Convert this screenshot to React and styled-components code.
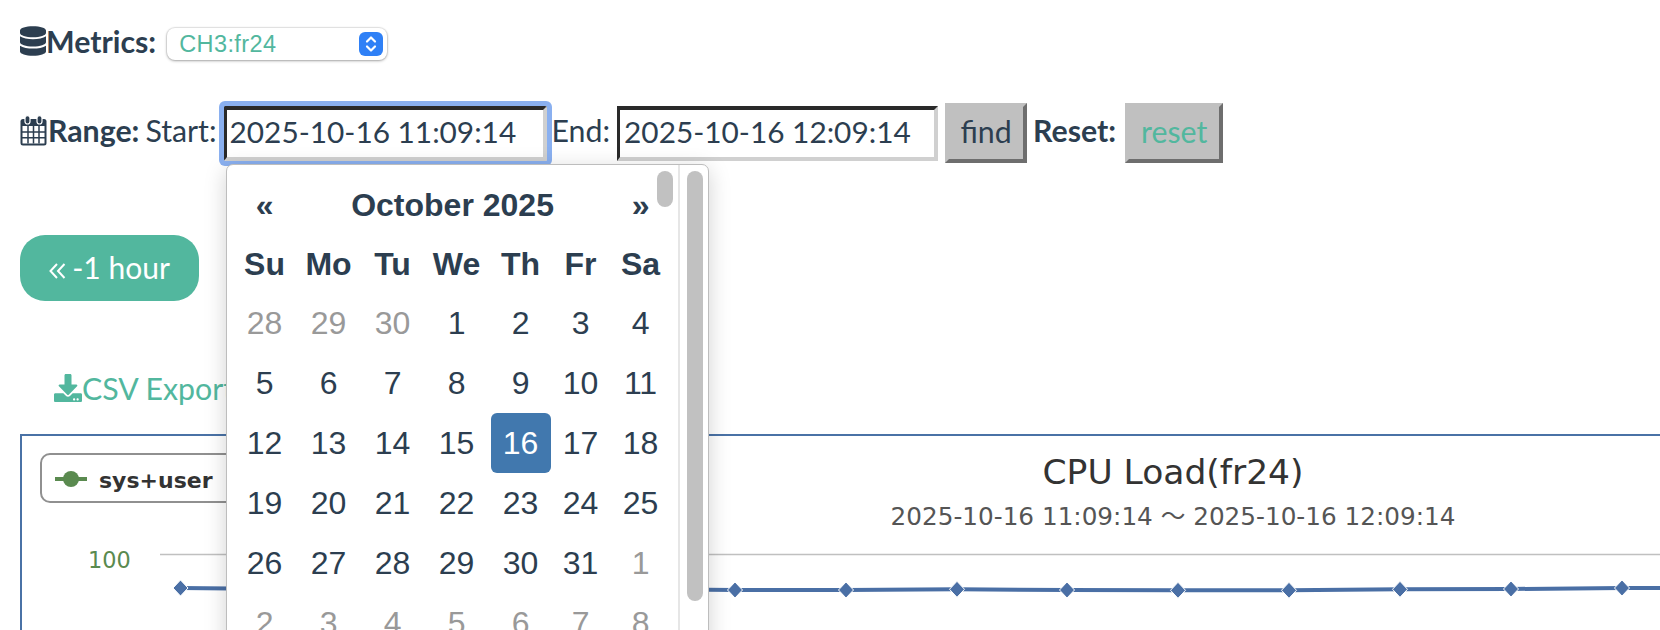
import React from 'react';
import styled, { createGlobalStyle } from 'styled-components';
import { FaDatabase, FaDownload } from 'react-icons/fa';

const GlobalStyle = createGlobalStyle`
  html, body {
    margin: 0;
    height: 100%;
    overflow: hidden;
    background: #fff;
  }
  body {
    font-family: Lato, "Liberation Sans", sans-serif;
    font-size: 30.3px;
    color: #2c3e50;
  }
`
const Page = styled.div`
  padding: 0 0 0 20px;
  width: 2400px;
`
const MetricsRow = styled.div`
  display: flex;
  align-items: center;
  height: 32px;
  margin-top: 28px;
`
const HeadIcon = styled(FaDatabase)`
  flex: none;
  width: 26px;
  height: 30px;
  margin-bottom: 6px;
`
const Label = styled.b`
  font-weight: 700;
  line-height: 1;
  margin-bottom: 6px;
`
const Plain = styled.span`
  line-height: 1;
  margin: 0 ${p => p.$right || 0}px 6px ${p => p.$left || 0}px;
`
const Select = styled.div`
  display: flex;
  align-items: center;
  justify-content: space-between;
  box-sizing: border-box;
  width: 220px;
  height: 32px;
  margin-left: 11px;
  padding: 0 4px 0 12px;
  background: #fff;
  border-radius: 8px;
  box-shadow: 0 0 1px 1px rgba(0,0,0,.09), 0 1px 3px rgba(0,0,0,.3);
  font-family: "Liberation Sans", sans-serif;
  font-size: 23.5px;
  letter-spacing: .4px;
  color: #52b79e;
`
const Stepper = styled.span`
  display: flex;
  width: 24px;
  height: 24px;
  background: #2f80f6;
  border-radius: 6px;
`
const RangeRow = styled.div`
  display: flex;
  align-items: center;
  height: 60px;
  margin-top: 43px;
`
const DateField = styled.div`
  position: relative;
  box-sizing: border-box;
  display: flex;
  align-items: center;
  width: ${p => p.$focused ? 323 : 321}px;
  height: 55px;
  margin: 0 ${p => p.$focused ? 5 : 7}px 0 ${p => p.$focused ? 7 : 7}px;
  padding: 0 0 2px ${p => p.$focused ? 3 : 4}px;
  border-style: solid;
  border-width: 4px 4px 4px 3px;
  border-color: #2a2a2a #d0d0d0 #d0d0d0 #2a2a2a;
  color: #2c3e50;
  font-size: 29.8px;
  line-height: 1;
  ${p => p.$focused && 'box-shadow: 0 0 0 5px #8ab0f0; border-radius: 2px;'}
`
const BevelButton = styled.button`
  box-sizing: border-box;
  width: ${p => p.$width}px;
  height: 60px;
  padding: 0 0 5px;
  margin: 0 ${p => p.$right || 0}px 0 ${p => p.$left || 0}px;
  background: #c0c0c0;
  border-style: solid;
  border-width: 4px;
  border-color: #c0c0c0 #6e6e6e #6e6e6e #c0c0c0;
  border-radius: 0;
  font: inherit;
  color: ${p => p.$green ? '#52b79e' : '#2c3e50'};
`
const Popup = styled.div`
  position: absolute;
  left: -1px;
  top: 54px;
  z-index: 5;
  display: flex;
  width: 483px;
  height: 560px;
  box-sizing: border-box;
  background: #fff;
  border: 1px solid #bdbdbd;
  border-radius: 7px;
  box-shadow: 0 5px 22px rgba(0,0,0,.18);
  font-family: "Liberation Sans", sans-serif;
  font-size: 32px;
  color: #2c3e50;
`
const CalendarPane = styled.div`
  position: relative;
  box-sizing: border-box;
  width: 453px;
  padding: 10px 0 0 6px;
  border-right: 2px solid #e6e6e6;
`
const CalendarGrid = styled.div`
  display: grid;
  grid-template-columns: repeat(5, 64px) 56px 64px;
  grid-template-rows: 60px 58px;
  grid-auto-rows: 60px;
`
const Cell = styled.div`
  display: flex;
  align-items: center;
  justify-content: center;
  font-weight: ${p => p.$bold ? 700 : 400};
  color: ${p => p.$muted ? '#999' : '#2c3e50'};
`
const MonthTitle = styled(Cell)`
  grid-column: span 5;
`
const SelectedDay = styled(Cell)`
  margin: 0 2px;
  background: #4178ae;
  border-radius: 6px;
  color: #fff;
`
const InnerThumb = styled.div`
  position: absolute;
  left: 430px;
  top: 6px;
  width: 16px;
  height: 36px;
  background: #c1c1c1;
  border-radius: 8px;
`
const ScrollTrack = styled.div`
  flex: 1;
  padding: 6px 0 0 7px;
`
const ScrollThumb = styled.div`
  width: 16px;
  height: 430px;
  background: #c1c1c1;
  border-radius: 8px;
`
const PillRow = styled.div`
  margin-top: 72px;
`
const Pill = styled.button`
  display: flex;
  align-items: center;
  justify-content: center;
  gap: 6px;
  width: 179px;
  height: 66px;
  padding: 0 0 2px;
  background: #52b79e;
  border: none;
  border-radius: 25px;
  font: inherit;
  font-size: 30px;
  color: #fff;
`
const ExportLink = styled.a`
  display: flex;
  align-items: center;
  height: 40px;
  margin: 67px 0 0 34px;
  color: #52b79e;
  line-height: 1;
`
const ChartBox = styled.div`
  position: relative;
  box-sizing: border-box;
  width: 2306px;
  height: 300px;
  margin-top: 26px;
  border: 2px solid #4a72a6;
  font-family: "DejaVu Sans", "Noto Sans CJK JP", sans-serif;
  text-align: center;
`
const ChartTitle = styled.div`
  margin-top: 16px;
  font-size: 34.5px;
  line-height: 40px;
  color: #333;
`
const ChartSubtitle = styled.div`
  margin-top: 10px;
  font-size: 24.7px;
  line-height: 30px;
  color: #555;
`
const Legend = styled.div`
  position: absolute;
  left: 18px;
  top: 17px;
  display: flex;
  align-items: center;
  gap: 12px;
  box-sizing: border-box;
  width: 260px;
  height: 50px;
  padding-left: 13px;
  background: #fff;
  border: 2px solid #909090;
  border-radius: 10px;
  font-size: 22px;
  font-weight: 700;
  color: #333;
`
const LegendText = styled.span`
  margin-top: 4px;
`
const AxisLabel = styled.span`
  position: absolute;
  left: 66px;
  top: 111px;
  font-size: 22.4px;
  line-height: 26px;
  color: #5a8a4f;
`
const Plot = styled.svg`
  position: absolute;
  left: 0;
  top: 0;
  overflow: visible;
`

const CalendarIcon = () => (
  <svg width="28" height="31" viewBox="0 0 28 31" style={{ flex: 'none', marginBottom: 5 }}>
    <rect x="0.5" y="4" width="26" height="26.5" rx="2.5" fill="#2c3e50" />
    <rect x="2.5" y="11" width="22" height="17.5" fill="#fff" />
    <path d="M2 17h23M2 22.8h23M8 11v17.5M13.5 11v17.5M19 11v17.5" stroke="#2c3e50" strokeWidth="1.5" />
    <rect x="5" y="0.6" width="5" height="8.4" rx="2.5" fill="#2c3e50" stroke="#fff" strokeWidth="1.2" />
    <rect x="17" y="0.6" width="5" height="8.4" rx="2.5" fill="#2c3e50" stroke="#fff" strokeWidth="1.2" />
  </svg>
)

const StepperIcon = () => (
  <svg width="24" height="24" viewBox="0 0 24 24">
    <path d="M8 9.5l4-4 4 4M8 14.5l4 4 4-4" fill="none" stroke="#fff" strokeWidth="2.2" strokeLinecap="round" strokeLinejoin="round" />
  </svg>
)

const DoubleLeftIcon = () => (
  <svg width="17" height="18" viewBox="0 0 17 18" style={{ flex: 'none', marginTop: 8 }}>
    <path d="M8 2L1.5 9L8 16M15.5 2L9 9L15.5 16" fill="none" stroke="#fff" strokeWidth="2" />
  </svg>
)

const WEEK = ['Su', 'Mo', 'Tu', 'We', 'Th', 'Fr', 'Sa']
const DAYS = [
  28, 29, 30, 1, 2, 3, 4,
  5, 6, 7, 8, 9, 10, 11,
  12, 13, 14, 15, 16, 17, 18,
  19, 20, 21, 22, 23, 24, 25,
  26, 27, 28, 29, 30, 31, 1,
  2, 3, 4, 5, 6, 7, 8,
]

const Calendar = () => (
  <Popup>
    <CalendarPane>
      <CalendarGrid>
        <Cell $bold>«</Cell>
        <MonthTitle $bold>October 2025</MonthTitle>
        <Cell $bold>»</Cell>
        {WEEK.map(w => <Cell key={w} $bold>{w}</Cell>)}
        {DAYS.map((d, i) => {
          if (i === 18) return <SelectedDay key={i}>{d}</SelectedDay>
          return <Cell key={i} $muted={i < 3 || i > 33}>{d}</Cell>
        })}
      </CalendarGrid>
      <InnerThumb />
    </CalendarPane>
    <ScrollTrack>
      <ScrollThumb />
    </ScrollTrack>
  </Popup>
)

const POINTS = [
  [158.5, 152], [269.5, 153], [380.5, 153], [491.5, 153], [602.5, 153],
  [713, 154], [824, 154], [935, 153.3], [1045, 154], [1156, 154.3],
  [1267, 154.3], [1378, 153.3], [1489, 153], [1600, 152], [1711, 152],
]

const App = () => {
  const line = POINTS.map(p => p.join(',')).join(' ')
  return (
    <>
      <GlobalStyle />
      <Page>
        <MetricsRow>
          <HeadIcon />
          <Label>Metrics:</Label>
          <Select>
            CH3:fr24
            <Stepper><StepperIcon /></Stepper>
          </Select>
        </MetricsRow>
        <RangeRow>
          <CalendarIcon />
          <Label>Range:</Label>
          <Plain $left={6}>Start:</Plain>
          <DateField $focused>
            2025-10-16 11:09:14
            <Calendar />
          </DateField>
          <Plain>End:</Plain>
          <DateField>2025-10-16 12:09:14</DateField>
          <BevelButton $width={82} $right={6}>find</BevelButton>
          <Label>Reset:</Label>
          <BevelButton $width={98} $left={9} $green>reset</BevelButton>
        </RangeRow>
        <PillRow>
          <Pill><DoubleLeftIcon />-1 hour</Pill>
        </PillRow>
        <ExportLink><FaDownload size={28} />CSV Export</ExportLink>
        <ChartBox>
          <ChartTitle>CPU Load(fr24)</ChartTitle>
          <ChartSubtitle>2025-10-16 11:09:14 〜 2025-10-16 12:09:14</ChartSubtitle>
          <Plot width="2302" height="296">
            <line x1="138" y1="118.5" x2="2302" y2="118.5" stroke="#c0c0c0" strokeWidth="1.5" />
            <polyline points={line} fill="none" stroke="#4a6fa5" strokeWidth="4" />
            {POINTS.map(([x, y]) => (
              <path key={x} d={`M${x} ${y - 8}L${x + 7.5} ${y}L${x} ${y + 8}L${x - 7.5} ${y}Z`} fill="#4a6fa5" stroke="#fff" strokeWidth="1" />
            ))}
          </Plot>
          <Legend>
            <svg width="32" height="20" viewBox="0 0 32 20" style={{ flex: 'none', marginTop: 2 }}>
              <line x1="0" y1="10" x2="32" y2="10" stroke="#5a8a4f" strokeWidth="4" />
              <circle cx="16" cy="10" r="8" fill="#5a8a4f" />
            </svg>
            <LegendText>sys+user</LegendText>
          </Legend>
          <AxisLabel>100</AxisLabel>
        </ChartBox>
      </Page>
    </>
  );
};

export default App;
